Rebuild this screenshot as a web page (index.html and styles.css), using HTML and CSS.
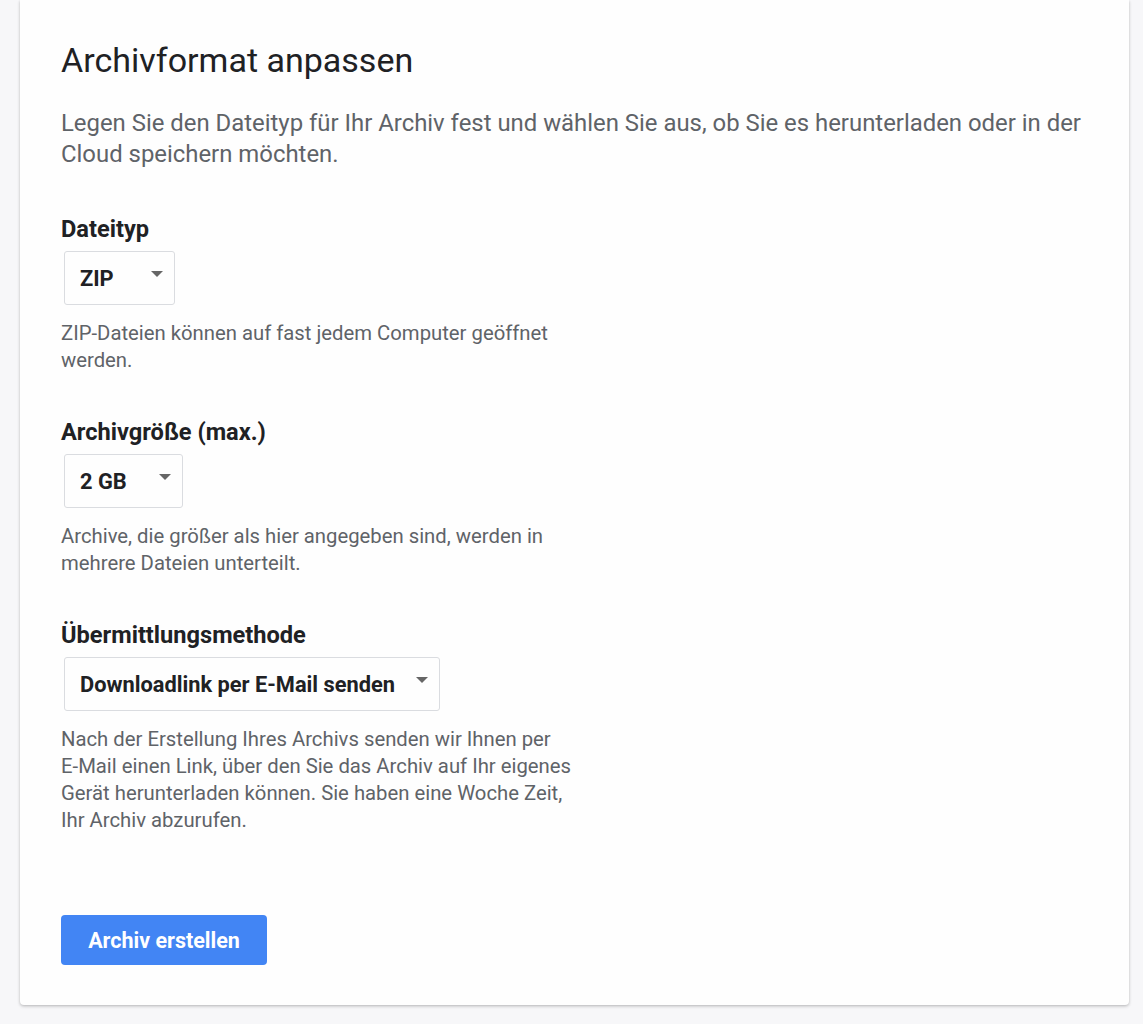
FILE: index.html
```html
<!DOCTYPE html>
<html lang="de">
<head>
<meta charset="utf-8">
<link rel="stylesheet" href="styles.css">
</head>
<body>
<main class="card">
  <h1 class="title">Archivformat anpassen</h1>
  <p class="intro">Legen Sie den Dateityp für Ihr Archiv fest und wählen Sie aus, ob Sie es herunterladen oder in der Cloud speichern möchten.</p>

  <section class="field">
    <h2 class="label">Dateityp</h2>
    <div class="select select-zip"><span>ZIP</span><i class="caret"></i></div>
    <p class="help">ZIP-Dateien können auf fast jedem Computer geöffnet werden.</p>
  </section>

  <section class="field">
    <h2 class="label">Archivgröße (max.)</h2>
    <div class="select select-size"><span>2 GB</span><i class="caret"></i></div>
    <p class="help">Archive, die größer als hier angegeben sind, werden in mehrere Dateien unterteilt.</p>
  </section>

  <section class="field">
    <h2 class="label">Übermittlungsmethode</h2>
    <div class="select select-method"><span>Downloadlink per E-Mail senden</span><i class="caret"></i></div>
    <p class="help">Nach der Erstellung Ihres Archivs senden wir Ihnen per<br>E-Mail einen Link, über den Sie das Archiv auf Ihr eigenes Gerät herunterladen können. Sie haben eine Woche Zeit, Ihr Archiv abzurufen.</p>
  </section>

  <button class="primary">Archiv erstellen</button>
</main>
</body>
</html>
```

FILE: styles.css
```css
html, body {
  margin: 0;
  padding: 0;
  background: #f7f7f9;
  font-family: Roboto, "Noto Sans", Arial, sans-serif;
}
body {
  padding: 0 14px 19px 20px;
  overflow: hidden;
}
.card {
  background: #fefefe;
  border-radius: 0 0 4px 4px;
  box-shadow: 0 1px 3px rgba(0,0,0,0.22), 0 2px 4px rgba(0,0,0,0.06);
  padding: 39px 41px 40px 41px;
}
.title {
  margin: 0;
  font-size: 34px;
  font-weight: 400;
  color: #202124;
  line-height: 42px;
}
.intro {
  margin: 27px 0 0;
  font-size: 23.9px;
  line-height: 31px;
  color: #5f6368;
}
.field {
  margin-top: 44px;
}
.field + .field {
  margin-top: 43px;
}
.label {
  margin: 0;
  font-size: 23.6px;
  font-weight: 700;
  color: #202124;
  line-height: 30px;
}
.select {
  display: inline-flex;
  align-items: center;
  box-sizing: border-box;
  height: 54px;
  margin: 7px 0 0 3px;
  padding: 0 11px 0 15px;
  border: 1px solid #dadce0;
  border-radius: 3px;
  font-size: 21.8px;
  font-weight: 700;
  color: #202124;
  vertical-align: top;
}
.select-zip { width: 111px; justify-content: space-between; }
.select-size { width: 119px; justify-content: space-between; }
.select-method { width: 376px; justify-content: space-between; }
.caret {
  width: 0;
  height: 0;
  border-left: 6px solid transparent;
  border-right: 6px solid transparent;
  border-top: 6px solid #666666;
  margin-top: -9px;
}
.help {
  margin: 15px 0 0;
  max-width: 522px;
  font-size: 20.3px;
  line-height: 27px;
  color: #5f6368;
}
.primary {
  display: block;
  margin-top: 81px;
  width: 206px;
  height: 50px;
  border: 0;
  border-radius: 4px;
  background: #4285f4;
  color: #fff;
  font-family: Roboto, "Noto Sans", Arial, sans-serif;
  font-size: 21.5px;
  font-weight: 700;
}
```
